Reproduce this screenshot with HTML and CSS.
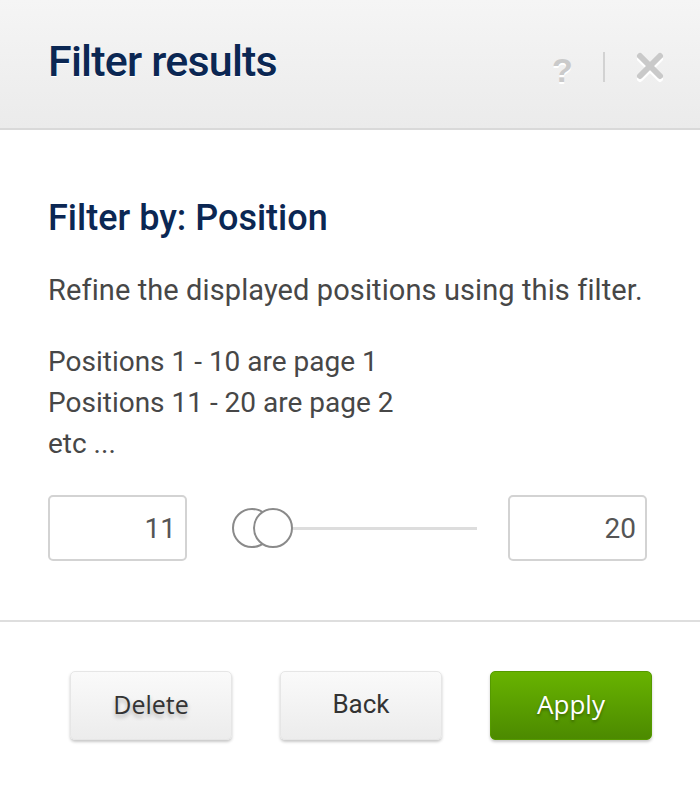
FILE: index.html
```html
<!DOCTYPE html>
<html lang="en">
<head>
<meta charset="utf-8">
<title>Filter results</title>
<link rel="stylesheet" href="styles.css">
</head>
<body>
<div class="dialog">
  <header class="dialog-header">
    <h1 class="dialog-title">Filter results</h1>
    <div class="header-tools">
      <span class="tool-help">?</span>
      <span class="tool-sep"></span>
      <svg class="tool-close" width="30" height="32" viewBox="0 0 30 32" aria-label="Close">
        <g stroke-linecap="round" stroke-width="6" fill="none">
          <path d="M5 6.5 L25 26.5 M25 6.5 L5 26.5" stroke="#ffffff" transform="translate(0,1.5)"/>
          <path d="M5 5 L25 25 M25 5 L5 25" stroke="#c9c9c9"/>
        </g>
      </svg>
    </div>
  </header>
  <main class="dialog-body">
    <h2 class="section-title">Filter by: Position</h2>
    <p class="intro">Refine the displayed positions using this filter.</p>
    <p class="notes">Positions 1 - 10 are page 1<br>Positions 11 - 20 are page 2<br>etc ...</p>
    <div class="range-row">
      <div class="range-input">11</div>
      <div class="slider">
        <div class="slider-track"></div>
        <span class="thumb thumb-a"></span>
        <span class="thumb thumb-b"></span>
      </div>
      <div class="range-input">20</div>
    </div>
  </main>
  <footer class="dialog-footer">
    <button class="btn btn-plain btn-shadowtext">Delete</button>
    <button class="btn btn-plain btn-roboto">Back</button>
    <button class="btn btn-apply">Apply</button>
  </footer>
</div>
</body>
</html>
```
FILE: styles.css
```css
html, body {
  margin: 0;
  padding: 0;
  background: #ffffff;
}
body {
  font-family: Roboto, "Liberation Sans", sans-serif;
  width: 700px;
  height: 787px;
  overflow: hidden;
}
.dialog-header {
  height: 128px;
  box-sizing: content-box;
  border-bottom: 2px solid #d9d9d9;
  background: linear-gradient(#f5f5f5, #ebebeb);
  display: flex;
  align-items: flex-start;
  justify-content: space-between;
  padding: 0 35px 0 48px;
}
.dialog-title {
  margin: 36px 0 0 0;
  font-family: Roboto, sans-serif;
  font-weight: 500;
  font-size: 43px;
  line-height: 50px;
  letter-spacing: -0.8px;
  color: #0b2753;
  text-shadow: 0 1px 0 #ffffff;
}
.header-tools {
  margin-top: 51px;
  height: 32px;
  display: flex;
  align-items: center;
}
.tool-help {
  font-family: "Liberation Sans", Arial, sans-serif;
  font-weight: bold;
  font-size: 34px;
  line-height: 32px;
  color: #cacaca;
  text-shadow: 0 1.5px 0 #ffffff;
  width: 21px;
  margin-top: 6px;
}
.tool-sep {
  width: 2px;
  height: 30px;
  background: #d2d2d2;
  margin: 0 30px 0 30px;
}
.tool-close {
  display: block;
}
.dialog-body {
  padding: 0 53px 0 48px;
  color: #474747;
}
.section-title {
  margin: 66px 0 0 0;
  font-weight: 500;
  font-size: 36px;
  line-height: 44px;
  color: #0b2753;
}
.intro {
  margin: 29px 0 0 0;
  font-size: 29px;
  line-height: 42px;
  letter-spacing: 0.1px;
}
.notes {
  margin: 30px 0 0 0;
  font-size: 28px;
  line-height: 41px;
}
.range-row {
  margin-top: 31px;
  display: flex;
  align-items: center;
}
.range-input {
  width: 139px;
  height: 66px;
  box-sizing: border-box;
  border: 2px solid #d3d3d3;
  border-radius: 5px;
  font-size: 28px;
  color: #555555;
  display: flex;
  align-items: center;
  justify-content: flex-end;
  padding-right: 9px;
}
.slider {
  flex: 1;
  position: relative;
  height: 40px;
  margin: 0 31px 0 45px;
  display: flex;
  align-items: center;
}
.slider-track {
  width: 100%;
  height: 3px;
  background: #dddddd;
}
.thumb {
  position: absolute;
  top: 0;
  width: 40px;
  height: 40px;
  box-sizing: border-box;
  border: 2px solid #8a8a8a;
  border-radius: 50%;
  background: #ffffff;
}
.thumb-a { left: 0; }
.thumb-b { left: 21px; }
.dialog-footer {
  margin-top: 59px;
  border-top: 2px solid #dedede;
  padding: 49px 48px 0 0;
  display: flex;
  justify-content: flex-end;
  gap: 48px;
}
.btn {
  width: 162px;
  height: 69px;
  box-sizing: border-box;
  border-radius: 5px;
  font-family: "Open Sans", "Noto Sans", sans-serif;
  font-size: 25px;
  display: flex;
  align-items: center;
  justify-content: center;
  padding: 0 0 3px 0;
  cursor: pointer;
}
.btn-plain {
  border: 1px solid #e6e6e6;
  background: linear-gradient(#fafafa, #ececec);
  color: #333333;
  box-shadow: 0 2px 3px rgba(0, 0, 0, 0.22);
}
.btn-shadowtext {
  text-shadow: 0 3px 4px rgba(0, 0, 0, 0.28);
}
.btn-roboto {
  font-family: Roboto, sans-serif;
  font-size: 26px;
}
.btn-apply {
  border: 1px solid #559a00;
  background: linear-gradient(#68b300, #4c8a00);
  color: #ffffff;
  font-size: 26px;
  text-shadow: 0 2px 3px rgba(0, 0, 0, 0.35);
  box-shadow: 0 2px 3px rgba(0, 0, 0, 0.22);
}
```
